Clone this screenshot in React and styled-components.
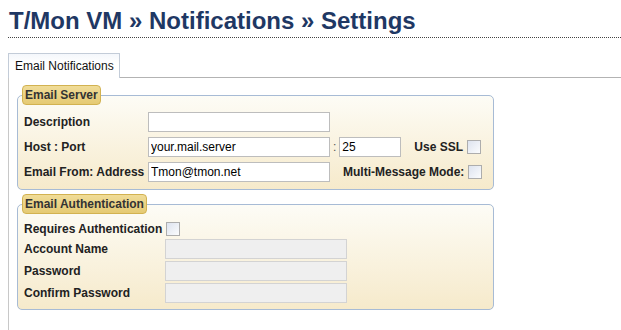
import React from 'react';
import styled, { createGlobalStyle } from 'styled-components';

const GlobalStyle = createGlobalStyle`
body {
    margin: 8px 0 0 8px;
    background: #fff;
    font-family: "Liberation Sans", Arial, sans-serif;
    font-size: 12px;
    color: #222;
    overflow: hidden;
}
`;

const App = () => {
    return (
        <>
            <GlobalStyle />
            <Title>T/Mon VM » Notifications » Settings</Title>
            <TabStrip>
                <Tab active>Email Notifications</Tab>
            </TabStrip>
            <Panel>
                <Group>
                    <Legend>Email Server</Legend>
                    <Rows gap={5}>
                        <Row>
                            <Label width={124}>Description</Label>
                            <TextInput defaultValue="" />
                        </Row>
                        <Row>
                            <Label width={124}>Host : Port</Label>
                            <TextInput defaultValue="your.mail.server" />
                            <Colon>:</Colon>
                            <TextInput small defaultValue="25" />
                            <SideLabel>Use SSL</SideLabel>
                            <Check type="checkbox" />
                        </Row>
                        <Row>
                            <Label width={124}>Email From: Address</Label>
                            <TextInput defaultValue="Tmon@tmon.net" />
                            <SideLabel>Multi-Message Mode:</SideLabel>
                            <Check type="checkbox" />
                        </Row>
                    </Rows>
                </Group>
                <Group second>
                    <Legend>Email Authentication</Legend>
                    <Rows gap={2}>
                        <Row short>
                            <Label>Requires Authentication</Label>
                            <Check type="checkbox" />
                        </Row>
                        <Row>
                            <Label width={141}>Account Name</Label>
                            <TextInput disabled />
                        </Row>
                        <Row>
                            <Label width={141}>Password</Label>
                            <TextInput type="password" disabled />
                        </Row>
                        <Row>
                            <Label width={141}>Confirm Password</Label>
                            <TextInput type="password" disabled />
                        </Row>
                    </Rows>
                </Group>
            </Panel>
        </>
    );
};

export default App;

//TITLE
const Title = styled.h1`
margin: 0;
padding: 0 0 3px 1px;
font-size: 24px;
line-height: 26px;
font-weight: bold;
color: #1f3864;
border-bottom: 1px dotted #444;
white-space: nowrap;
`;

//TABS
const TabStrip = styled.div`
display: flex;
margin-top: 15px;
position: relative;
z-index: 1;
`;

const Tab = styled.div`
width: 112px;
box-sizing: border-box;
height: 25px;
margin-bottom: -1px;
padding: 1px 0 0 6px;
line-height: 22px;
font-size: 12px;
color: #111;
background: ${p => (p.active ? 'linear-gradient(#f4f7fb, #fff 40%)' : '#eee')};
border: 1px solid #c3ccd8;
border-bottom: none;
`;

const Panel = styled.div`
border-top: 1px solid #b3b3b3;
border-left: 1px solid #c8c8c8;
padding: 7px 0 0 8px;
min-height: 260px;
`;

//FIELDSETS
const Group = styled.fieldset`
box-sizing: border-box;
width: 477px;
margin: ${p => (p.second ? '4px' : '0')} 0 0 0;
padding: 7px 4px ${p => (p.second ? '6px' : '7px')} 4px;
border: 1px solid #a7bbd5;
border-radius: 5px;
background: linear-gradient(#fdfcf6, #f6eacb);
`;

const Legend = styled.legend`
padding: 0 2px;
line-height: 18px;
font-size: 12px;
font-weight: bold;
color: #333;
background: linear-gradient(#f0dc98, #e5ca74);
border: 1px solid #d2b251;
border-radius: 4px;
`;

const Rows = styled.div`
display: flex;
flex-direction: column;
gap: ${p => p.gap}px;
padding-left: 2px;
`;

const Row = styled.div`
display: flex;
align-items: center;
height: ${p => (p.short ? '16px' : '20px')};
`;

const Label = styled.span`
flex: none;
width: ${p => (p.width ? `${p.width}px` : 'auto')};
font-weight: bold;
font-size: 12px;
color: #222;
white-space: nowrap;
`;

const SideLabel = styled(Label)`
margin-left: 13px;
`;

const Colon = styled.span`
margin: 0 3px;
color: #555;
`;

//INPUTS
const TextInput = styled.input`
box-sizing: border-box;
width: ${p => (p.small ? '62px' : '182px')};
height: 20px;
margin: 0;
padding: 0 2px;
font-family: "Liberation Sans", Arial, sans-serif;
font-size: 12px;
color: #000;
background: #fff;
border: 1px solid #bdbdbd;
outline: none;

&:disabled {
    background: #efefef;
    border-color: #d3d3d3;
}
`;

const Check = styled.input`
appearance: none;
box-sizing: border-box;
width: 14px;
height: 14px;
margin: 0 0 0 4px;
border: 1px solid #adadad;
background: linear-gradient(135deg, #dde3ef, #fbfcfd);
`;
